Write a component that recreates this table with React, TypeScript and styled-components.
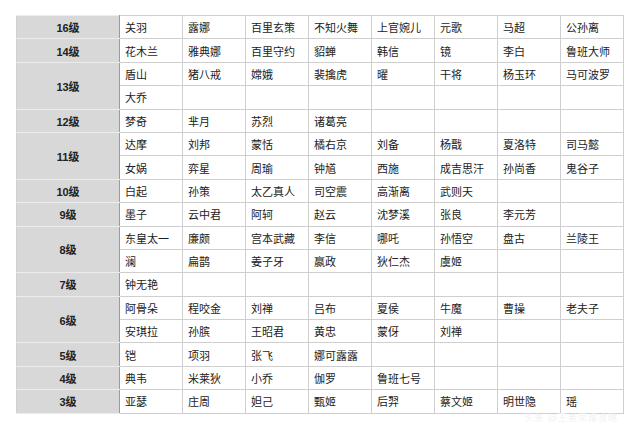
import { createGlobalStyle } from 'styled-components'
import styled from 'styled-components'

const GlobalStyle = createGlobalStyle`
  html, body {
    margin: 0;
    padding: 0;
    background: #ffffff;
  }
  body {
    font-family: "Liberation Sans", "Noto Sans CJK SC", sans-serif;
    color: #1a1a1a;
  }
`

type Tier = { label: string; rows: string[][] }

const tiers: Tier[] = [
  { label: '16级', rows: [['关羽', '露娜', '百里玄策', '不知火舞', '上官婉儿', '元歌', '马超', '公孙离']] },
  { label: '14级', rows: [['花木兰', '雅典娜', '百里守约', '貂蝉', '韩信', '镜', '李白', '鲁班大师']] },
  {
    label: '13级',
    rows: [
      ['盾山', '猪八戒', '嫦娥', '裴擒虎', '曜', '干将', '杨玉环', '马可波罗'],
      ['大乔'],
    ],
  },
  { label: '12级', rows: [['梦奇', '芈月', '苏烈', '诸葛亮']] },
  {
    label: '11级',
    rows: [
      ['达摩', '刘邦', '蒙恬', '橘右京', '刘备', '杨戬', '夏洛特', '司马懿'],
      ['女娲', '弈星', '周瑜', '钟馗', '西施', '成吉思汗', '孙尚香', '鬼谷子'],
    ],
  },
  { label: '10级', rows: [['白起', '孙策', '太乙真人', '司空震', '高渐离', '武则天']] },
  { label: '9级', rows: [['墨子', '云中君', '阿轲', '赵云', '沈梦溪', '张良', '李元芳']] },
  {
    label: '8级',
    rows: [
      ['东皇太一', '廉颇', '宫本武藏', '李信', '哪吒', '孙悟空', '盘古', '兰陵王'],
      ['澜', '扁鹊', '姜子牙', '嬴政', '狄仁杰', '虞姬'],
    ],
  },
  { label: '7级', rows: [['钟无艳']] },
  {
    label: '6级',
    rows: [
      ['阿骨朵', '程咬金', '刘禅', '吕布', '夏侯', '牛魔', '曹操', '老夫子'],
      ['安琪拉', '孙膑', '王昭君', '黄忠', '蒙伢', '刘禅'],
    ],
  },
  { label: '5级', rows: [['铠', '项羽', '张飞', '娜可露露']] },
  { label: '4级', rows: [['典韦', '米莱狄', '小乔', '伽罗', '鲁班七号']] },
  { label: '3级', rows: [['亚瑟', '庄周', '妲己', '甄姬', '后羿', '蔡文姬', '明世隐', '瑶']] },
]

const COLS = 8

export default function App() {
  return (
    <>
      <GlobalStyle />
      <Page>
        <Table>
          <colgroup>
            <col style={{ width: 103 }} />
            {Array.from({ length: COLS }, (_, i) => (
              <col key={i} style={{ width: 63 }} />
            ))}
          </colgroup>
          <tbody>
            {tiers.flatMap((tier) =>
              tier.rows.map((row, ri) => (
                <Row key={`${tier.label}-${ri}`}>
                  {ri === 0 && <LevelCell rowSpan={tier.rows.length}>{tier.label}</LevelCell>}
                  {Array.from({ length: COLS }, (_, ci) => (
                    <NameCell key={ci}>{row[ci] ?? ''}</NameCell>
                  ))}
                </Row>
              )),
            )}
          </tbody>
        </Table>
        <Watermark>头条 @王者荣耀攻略</Watermark>
      </Page>
    </>
  )
}

const Page = styled.div`
  position: relative;
  width: 640px;
  height: 433px;
  padding: 15px 0 0 16px;
  box-sizing: border-box;
`

const Table = styled.table`
  border-collapse: collapse;
  table-layout: fixed;
  width: 607px;
`

const Row = styled.tr`
  height: 23.4px;
`

const LevelCell = styled.td`
  background: #d8d8d8;
  border: 1px solid #ececec;
  border-right: 1px solid #9a9a9a;
  border-left-color: #d0d0d0;
  text-align: center;
  font-weight: bold;
  font-size: 11px;
  color: #222;
  padding: 0;
`

const NameCell = styled.td`
  border: 1px solid #cfcfcf;
  font-size: 11px;
  color: #222;
  padding: 0 0 0 5px;
  white-space: nowrap;
  overflow: hidden;
`

const Watermark = styled.div`
  position: absolute;
  right: 22px;
  top: 411px;
  font-size: 9px;
  color: #f2f2f2;
  letter-spacing: 1px;
`
